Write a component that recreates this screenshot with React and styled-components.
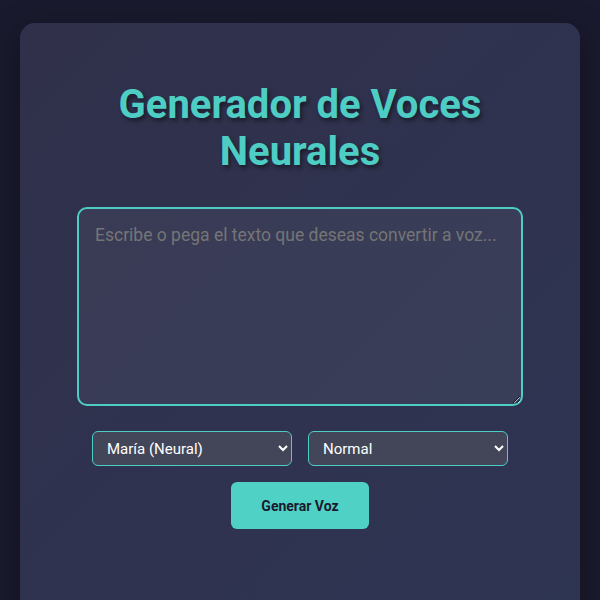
import React, { useState } from 'react'
import styled, { createGlobalStyle } from 'styled-components'

const ACCENT = "#4ecdc4"

const GlobalStyle = createGlobalStyle`
    * {
        box-sizing: border-box;
    }
    html, body {
        margin: 0;
        padding: 0;
        background: #1a1a2e;
        font-family: Roboto, "Liberation Sans", sans-serif;
    }
`

const voices = ["María (Neural)", "Jorge (Neural)", "Elvira (Neural)"]
const speeds = ["Normal", "Lenta", "Rápida"]

const App = () => {
    const [text, setText] = useState("")
    const [voice, setVoice] = useState(voices[0])
    const [speed, setSpeed] = useState(speeds[0])

    return (
        <Page>
            <GlobalStyle />
            <Card>
                <Title>Generador de Voces Neurales</Title>
                <TextBox
                    value={text}
                    onChange={(e) => setText(e.target.value)}
                    placeholder="Escribe o pega el texto que deseas convertir a voz..."
                />
                <Options>
                    <Select value={voice} onChange={(e) => setVoice(e.target.value)}>
                        {voices.map(v => <option key={v}>{v}</option>)}
                    </Select>
                    <Select value={speed} onChange={(e) => setSpeed(e.target.value)}>
                        {speeds.map(s => <option key={s}>{s}</option>)}
                    </Select>
                </Options>
                <Button>Generar Voz</Button>
            </Card>
        </Page>
    )
}

export default App

const Page = styled.main`
    height: 600px;
    padding: 23px 20px 0;
    overflow: hidden;
`

const Card = styled.section`
    background: linear-gradient(135deg, #30304a 0%, #2f3350 60%, #2d3452 100%);
    border-radius: 15px;
    box-shadow: 0 8px 30px rgba(0, 0, 0, 0.35);
    padding: 58px 57px 80px;
    min-height: 620px;
    display: flex;
    flex-direction: column;
    align-items: center;
`

const Title = styled.h1`
    margin: 0 0 32px;
    width: 380px;
    text-align: center;
    font-size: 40px;
    line-height: 47px;
    font-weight: 700;
    color: ${ACCENT};
    text-shadow: 2px 3px 4px rgba(0, 0, 0, 0.45);
`

const TextBox = styled.textarea`
    width: 446px;
    height: 199px;
    padding: 16px;
    border: 2px solid ${ACCENT};
    border-radius: 10px;
    background: rgba(255, 255, 255, 0.05);
    color: #fff;
    font-family: Roboto, "Liberation Sans", sans-serif;
    font-size: 17.5px;
    outline: none;
    resize: vertical;

    ::placeholder {
        color: #7b7c8c;
    }
`

const Options = styled.div`
    display: flex;
    gap: 16px;
    margin-top: 25px;
`

const Select = styled.select`
    width: 200px;
    height: 35px;
    padding: 0 8px 0 10px;
    border: 1px solid ${ACCENT};
    border-radius: 6px;
    background: #434659;
    color: #fff;
    font-family: Roboto, "Liberation Sans", sans-serif;
    font-size: 15px;
    outline: none;

    option {
        background: #2f3350;
    }
`

const Button = styled.button`
    margin-top: 16px;
    width: 138px;
    height: 47px;
    border: none;
    border-radius: 6px;
    background: #4fd1c5;
    color: #1a1a2e;
    font-family: Roboto, "Liberation Sans", sans-serif;
    font-size: 14px;
    font-weight: 700;
    cursor: pointer;
`
